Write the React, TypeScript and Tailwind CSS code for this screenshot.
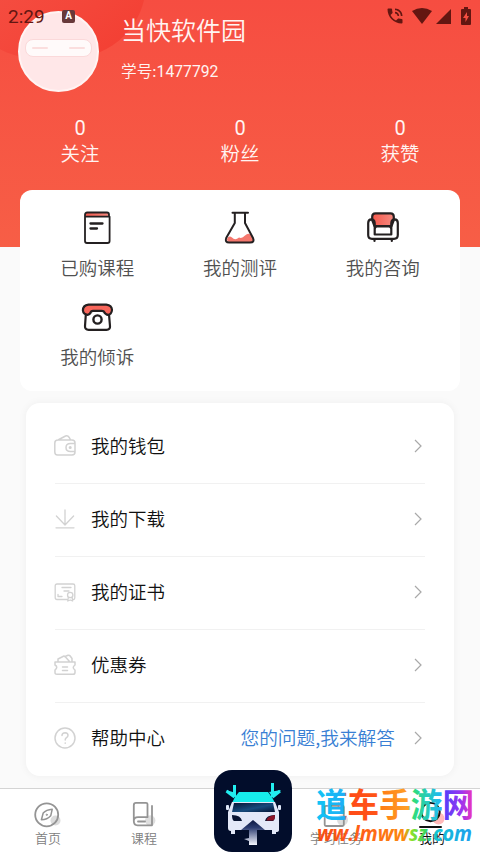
import React from "react";

const ink = { stroke: "#242021", strokeWidth: 2.2, strokeLinecap: "round", strokeLinejoin: "round", fill: "none" } as const;
const soft = { stroke: "#d2d2d2", strokeWidth: 1.5, strokeLinecap: "round", strokeLinejoin: "round", fill: "none" } as const;
const tab = { stroke: "#949494", strokeWidth: 1.8, strokeLinecap: "round", strokeLinejoin: "round", fill: "none" } as const;

function Gradients() {
  return (
    <svg className="absolute h-0 w-0" aria-hidden="true">
      <defs>
        <linearGradient id="coral" x1="0" y1="0" x2="1" y2="0">
          <stop offset="0" stopColor="#f4584c" />
          <stop offset="1" stopColor="#f58a80" />
        </linearGradient>
        <linearGradient id="brand" gradientUnits="userSpaceOnUse" x1="0" y1="0" x2="158" y2="0">
          <stop offset="0" stopColor="#10c4f5" />
          <stop offset="0.18" stopColor="#1eaef5" />
          <stop offset="0.195" stopColor="#ff4a17" />
          <stop offset="0.38" stopColor="#ff5418" />
          <stop offset="0.4" stopColor="#ff7b14" />
          <stop offset="0.585" stopColor="#ffa028" />
          <stop offset="0.6" stopColor="#31e070" />
          <stop offset="0.79" stopColor="#20b8f5" />
          <stop offset="0.8" stopColor="#4a3ffa" />
          <stop offset="0.92" stopColor="#9b35f0" />
          <stop offset="1" stopColor="#f535b4" />
        </linearGradient>
        <linearGradient id="brandUrl" gradientUnits="userSpaceOnUse" x1="0" y1="0" x2="158" y2="0">
          <stop offset="0" stopColor="#f84a14" />
          <stop offset="0.3" stopColor="#ff6018" />
          <stop offset="0.56" stopColor="#fb8a10" />
          <stop offset="0.6" stopColor="#8fe02a" />
          <stop offset="0.69" stopColor="#3fd85a" />
          <stop offset="0.76" stopColor="#11c4d3" />
          <stop offset="1" stopColor="#219bef" />
        </linearGradient>
      </defs>
    </svg>
  );
}

function BookIcon() {
  return (
    <svg className="h-9 w-9" viewBox="0 0 36 36" {...ink}>
      <path d="M6 7V4.7Q6 2.5 8.2 2.5H28.5Q30 2.5 30 4V7Z" fill="url(#coral)" stroke="none" />
      <path d="M6 7V4.8Q6 2.5 8.3 2.5H28Q30 2.5 30 4.5V6.7H7.5M6 7V31Q6 33 8 33H28.5Q30.6 33 30.6 31V6.7" strokeWidth="1.8" />
      <path d="M11.5 13.5H23.5M11.5 18.5H18" strokeWidth="2.3" />
    </svg>
  );
}
function FlaskIcon() {
  return (
    <svg className="h-9 w-9" viewBox="0 0 36 36" {...ink} strokeWidth={2}>
      <path d="M5 29Q7 25 10 27.5Q13 31 17 27.5Q20 29 23 25.5Q27 22 29.5 26L31.5 30Q31 32 29 32H8Q5 32 5 29Z" fill="#f4776d" stroke="none" />
      <path d="M10.5 2.7H26M12.8 2.8V13L4.2 28Q2.6 32.5 7.2 32.5H28Q33 32.5 31 28L23 13V2.8" />
    </svg>
  );
}
function SofaIcon() {
  return (
    <svg className="h-9 w-9" viewBox="0 0 36 36" {...ink}>
      <path d="M7.2 10V6.8Q7.2 3.4 10.5 3.4H25.5Q28.8 3.4 28.8 6.8V10L26.5 16H9.5Z" fill="url(#coral)" />
      <path d="M9.7 24.5V13Q9.4 9.4 6.4 9.4Q3.2 9.4 3.2 13V25Q3.2 28.8 7 28.8H29Q32.8 28.8 32.8 25V13Q32.8 9.4 29.6 9.4Q26.6 9.4 26.3 13V24.5ZM9.7 19Q10 16.4 12 16.4H24Q26 16.4 26.3 19M9.5 29.3V31M26.8 29.3V31" />
    </svg>
  );
}
function PhoneIcon() {
  return (
    <svg className="h-9 w-9" viewBox="0 0 36 36" {...ink}>
      <path d="M7 13L6 27Q5.8 30.8 9.6 30.8H27.5Q31.4 30.8 31 27L29.8 13" fill="white" />
      <path d="M9.5 5.7H27.3Q32.8 6.4 33 11Q32.5 15.6 29 15.8Q26.5 15.6 24.8 12.4Q24 11.8 22.5 11.8H14Q12.8 11.8 12 12.6Q11 15.6 8.5 15.8Q4.4 15.4 3.9 11.4Q4 6.4 9.5 5.7Z" fill="#f8665b" />
      <circle cx="18.5" cy="20.5" r="4.1" strokeWidth="2.4" />
    </svg>
  );
}

function WalletIcon() {
  return (
    <svg className="h-6 w-6" viewBox="0 0 24 24" {...soft}>
      <path d="M5 6H19Q22 6 22 9V18Q22 21 19 21H4.5Q1.8 21 1.8 18V9Q1.8 6 5 6L12.5 2Q15 .5 17.5 5.8M22 9.5H17.5Q13 9.5 13 13.5Q13 17.5 17.5 17.5H22" />
      <circle cx="17.2" cy="13.5" r=".8" />
    </svg>
  );
}
function DownloadIcon() {
  return (
    <svg className="h-6 w-6" viewBox="0 0 24 24" {...soft} strokeWidth={1.3}>
      <path d="M12 3V18M3.4 9L12 18L20.6 9M3 20.8H21" />
    </svg>
  );
}
function CertificateIcon() {
  return (
    <svg className="h-6 w-6" viewBox="0 0 24 24" {...soft} strokeWidth={1.3}>
      <path d="M14 19.5H4Q2.2 19.5 2.2 17.8V5.7Q2.2 4 4 4H20Q21.8 4 21.8 5.7V17.8Q21.8 19.5 20.5 19.5M9 7.5H18M11 11H16M5 16.5V14.5M5 16.5H9M15.3 17.5L14.8 21L17.2 20L19.6 21L19.2 17.5" />
      <circle cx="17.2" cy="15" r="2.7" />
    </svg>
  );
}
function CouponIcon() {
  return (
    <svg className="h-6 w-6" viewBox="0 0 24 24" {...soft}>
      <path d="M2 9H22V12Q18.5 14.5 22 17V19.5Q22 21.3 20 21.3H4Q1.7 21.3 2 19V17Q5.5 14 2 12ZM5 8.5V6L10 3.5Q11 2.5 12.5 4L16.5 8.5M12 3.5L15 2.3Q16.5 2 17.2 3L19 5.5V8.5M9.5 14H14.5M9.5 17.5H14.5" />
    </svg>
  );
}
function HelpIcon() {
  return (
    <svg className="h-6 w-6" viewBox="0 0 24 24" {...soft}>
      <circle cx="12" cy="12" r="10" />
      <path d="M9 9.6Q9 6.8 12.2 6.8Q15 7 15 9.3Q15 10.7 13.5 11.6Q12.2 12.5 12.2 14M12.2 17V17.2" />
    </svg>
  );
}

function HomeIcon() {
  return (
    <svg className="h-7 w-7" viewBox="0 0 28 28" {...tab}>
      <circle cx="21.5" cy="18.5" r="5" fill="#dcdcdc" stroke="none" />
      <circle cx="12.7" cy="12.8" r="11.5" />
      <path d="M7.4 17.8L9.2 11Q12.2 7.8 18.2 7.3L16.7 13.8Q13.2 17.8 7.4 17.8Z" strokeWidth="1.5" />
      <circle cx="12.7" cy="12.8" r=".6" strokeWidth="1" />
    </svg>
  );
}
function CourseIcon() {
  return (
    <svg className="h-7 w-7" viewBox="0 0 28 28" {...tab}>
      <circle cx="20.2" cy="18.5" r="5.2" fill="#dedede" stroke="none" />
      <path d="M17.5 15V2Q17.5 .9 16 .9H6Q3.8 .9 3.8 3.2V19Q3.8 15.2 8 15.2H17.5M3.8 19Q3.8 23.3 7.5 23.3H22V4M8 19.5H15" />
    </svg>
  );
}
function TaskIcon() {
  return (
    <svg className="h-7 w-7" viewBox="0 0 28 28" {...tab}>
      <circle cx="20.5" cy="18" r="5.5" fill="#dedede" stroke="none" />
      <path d="M4 3.8H20.5Q21.8 3.8 21.8 5V22.8Q21.8 24 20.5 24H4Q2.7 24 2.7 22.8V5Q2.7 3.8 4 3.8ZM8 1.5V6M16.5 1.5V6M8 16H16" />
    </svg>
  );
}
function MineIcon() {
  return (
    <svg className="h-7 w-7" viewBox="0 0 28 28" {...tab} stroke="#111" strokeWidth={2}>
      <circle cx="20.5" cy="16.5" r="6" fill="#ffb9b9" stroke="none" />
      <circle cx="12.5" cy="10" r="9.2" />
      <path d="M2 25H23" />
    </svg>
  );
}

function StatusBar() {
  return (
    <div className="absolute inset-x-0 top-0 z-10 flex h-8 items-center pr-[9px] pl-2 text-[#631611]">
      <span className="w-[54px] font-['Roboto',sans-serif] text-[19px] leading-none font-normal">2:29</span>
      <span className="flex h-[13px] w-[13px] items-center justify-center rounded-[2px] bg-[#68393a] font-['Roboto',sans-serif] text-[10px] leading-none font-bold text-white">A</span>
      <div className="ml-auto flex items-center">
        <svg className="h-[20px] w-[20px]" viewBox="0 0 24 24" fill="currentColor">
          <path d="M20 15.5c-1.25 0-2.45-.2-3.57-.57-.35-.11-.74-.03-1.02.24l-2.2 2.2c-2.83-1.44-5.15-3.75-6.59-6.59l2.2-2.2c.28-.28.36-.67.25-1.02C8.7 6.45 8.5 5.25 8.5 4c0-.55-.45-1-1-1H4c-.55 0-1 .45-1 1 0 9.39 7.61 17 17 17 .55 0 1-.45 1-1v-3.5c0-.55-.45-1-1-1zM19 12h2c0-4.97-4.03-9-9-9v2c3.87 0 7 3.13 7 7zm-4 0h2c0-2.76-2.24-5-5-5v2c1.66 0 3 1.34 3 3z" />
        </svg>
        <svg className="ml-[7px] h-4 w-[20px]" viewBox="0 0 20 16" fill="currentColor"><path d="M10 16L0 3Q10-3 20 3Z" /></svg>
        <svg className="ml-1 h-[15px] w-[15px]" viewBox="0 0 15 15" fill="currentColor"><path d="M15 0V15H0Z" /></svg>
        <svg className="ml-2.5 h-[18px] w-[10px]" viewBox="0 0 10 18" fill="currentColor"><path fillRule="evenodd" d="M3 0H7V2H9Q10 2 10 3V17Q10 18 9 18H1Q0 18 0 17V3Q0 2 1 2H3ZM6 5L2 11H4.5V15L8 9H6Z" /></svg>
      </div>
    </div>
  );
}

const stats = ["关注", "粉丝", "获赞"];
const services = [
  { label: "已购课程", icon: <BookIcon /> },
  { label: "我的测评", icon: <FlaskIcon /> },
  { label: "我的咨询", icon: <SofaIcon /> },
  { label: "我的倾诉", icon: <PhoneIcon /> },
];
const menu = [
  { label: "我的钱包", icon: <WalletIcon /> },
  { label: "我的下载", icon: <DownloadIcon /> },
  { label: "我的证书", icon: <CertificateIcon /> },
  { label: "优惠券", icon: <CouponIcon /> },
  { label: "帮助中心", icon: <HelpIcon />, note: "您的问题,我来解答" },
];
const tabs = [
  { label: "首页", icon: <HomeIcon /> },
  { label: "课程", icon: <CourseIcon /> },
  { label: "", icon: null },
  { label: "学习任务", icon: <TaskIcon /> },
  { label: "我的", icon: <MineIcon />, active: true },
];

function CarBadge() {
  return (
    <svg className="absolute top-[770px] left-[214px] h-[82px] w-[78px]" viewBox="0 0 78 82">
      <defs>
        <linearGradient id="roadArrow" x1="0" y1="0" x2="0" y2="1">
          <stop offset="0" stopColor="#0b1640" />
          <stop offset=".3" stopColor="#2c3c70" />
          <stop offset="1" stopColor="#f5f7ff" />
        </linearGradient>
        <linearGradient id="glass" x1="0" y1="0" x2="1" y2="1">
          <stop offset="0" stopColor="#061334" />
          <stop offset=".55" stopColor="#174b7d" />
          <stop offset="1" stopColor="#061334" />
        </linearGradient>
      </defs>
      <rect width="78" height="82" rx="18" fill="#020d2b" />
      <path d="M20.5 15V26M12.5 21L20.5 27M58.5 13V27M66 21L58.5 27" stroke="#22eef0" strokeWidth="3" fill="none" />
      <path d="M12 20L22 23V28ZM55 22L67 20L59 28Z" fill="#22eef0" />
      <path d="M25 22H54Q59 28 61 33H18Q20 27 25 22Z" fill="#16edec" />
      <path d="M18 32H61L65 42V60Q65 62 62 62V64H58V60H21V64H17V61Q14 61 14 58V42Z" fill="#e3e8f8" />
      <path d="M20 33H59L61 42H18Z" fill="url(#glass)" />
      <path d="M18 45Q27 45 28 51H20Q18 50 18 45ZM61 45Q52 45 51 51H59Q61 50 61 45Z" fill="#081331" />
      <path d="M61 45Q53 46 52.5 50.5H59Q61 50 61 45Z" fill="#8d1226" />
      <rect x="12" y="35" width="3" height="5" rx="1" fill="#dfe7f8" />
      <rect x="64" y="35" width="3" height="5" rx="1" fill="#dfe7f8" />
      <path d="M39 50L51 60H43V75H35V71L30 69L35 68V60H27Z" fill="url(#roadArrow)" />
    </svg>
  );
}

function SiteMark() {
  return (
    <svg className="absolute top-[774px] left-[306px] h-[80px] w-[174px] overflow-visible" viewBox="-10 -10 174 80">
      <text x="0" y="33" textLength="158" lengthAdjust="spacingAndGlyphs" fill="url(#brand)" className="font-['Noto_Sans_CJK_SC',sans-serif] text-[33px] font-bold">道车手游网</text>
      <text x="1" y="57" textLength="155" lengthAdjust="spacingAndGlyphs" fill="url(#brandUrl)" className="font-['Open_Sans',sans-serif] text-[22px] font-bold italic">ww.lmwwsz.com</text>
    </svg>
  );
}

export default function App() {
  return (
    <div className="relative flex h-[854px] w-[480px] flex-col overflow-hidden bg-[#fafafa] font-['Noto_Sans_CJK_SC',sans-serif] font-[350]">
      <Gradients />
      <StatusBar />
      <header className="relative h-[247px] shrink-0 overflow-hidden bg-linear-to-b from-[#f64d41] to-[#f75e46]">
        <div className="absolute -top-[92px] -left-[40px] h-[150px] w-[186px] rounded-full bg-linear-to-br from-[#f65549] to-[#f33d31]" />
        <div className="relative flex items-start pt-[11px] pl-[18px]">
          <div className="flex h-[81px] w-[81px] items-start justify-center rounded-full border-2 border-[#fff4f3] bg-[#ffe7e8] pt-[26px]">
            <div className="flex h-[18px] w-[67px] items-center justify-between rounded-[8px] border border-[#fbd9da] bg-[#fffafa] px-1.5">
              <span className="h-[2px] w-4 rounded-full bg-[#fbdede]" />
              <span className="h-[2px] w-4 rounded-full bg-[#fbdede]" />
            </div>
          </div>
          <div className="pl-[22px] text-[#fff4f2]">
            <h1 className="text-[25px] leading-[36px] font-[350]">当快软件园</h1>
            <p className="mt-[13px] text-[15.7px] leading-[22px]">学号:<span className="font-['Roboto',sans-serif] font-normal">1477792</span></p>
          </div>
        </div>
        <div className="relative mt-[25px] grid grid-cols-3 text-center text-[#fff4f2]">
          {stats.map((s) => (
            <div key={s}>
              <div className="font-['Roboto',sans-serif] text-[20px] leading-[22px] font-normal">0</div>
              <div className="text-[19.5px] leading-[28px]">{s}</div>
            </div>
          ))}
        </div>
      </header>
      <section className="relative z-1 mx-5 -mt-[57px] grid h-[201px] shrink-0 grid-cols-3 content-start rounded-[12px] bg-white px-1.5 pt-[20px]">
        {services.map((s) => (
          <div key={s.label} className="flex h-[89px] flex-col items-center">
            {s.icon}
            <span className="mt-[7px] text-[18.5px] leading-[28px] text-[#505050]">{s.label}</span>
          </div>
        ))}
      </section>
      <section className="mx-[26px] mt-3 h-[373px] shrink-0 rounded-[14px] bg-white px-[27px] pt-2 shadow-[0_0_9px_rgba(0,0,0,0.05)]">
        {menu.map((m) => (
          <div key={m.label} className="flex h-[73px] items-center bg-[linear-gradient(#f1f1f1,#f1f1f1)] bg-[length:370px_1px] bg-bottom bg-no-repeat pb-1 last:bg-none">
            {m.icon}
            <span className="ml-3.5 text-[18.5px] text-[#111]">{m.label}</span>
            {m.note && <span className="mr-[17px] ml-auto text-[18.7px] text-[#397fd4]">{m.note}</span>}
            <svg className={m.note ? "mr-[3px] h-4 w-3" : "mr-[3px] ml-auto h-4 w-3"} viewBox="0 0 12 16" fill="none" stroke="#a9a9a9" strokeWidth="1.2">
              <path d="M3 2L9 8L3 14" />
            </svg>
          </div>
        ))}
      </section>
      <nav className="mt-3 grid h-[66px] shrink-0 grid-cols-5 border-t border-[#d4d4d4] bg-white pt-[13px]">
        {tabs.map((t) => (
          <div key={t.label} className="flex flex-col items-center">
            <span className="flex h-[27px]">{t.icon}</span>
            <span className={t.active ? "text-[13px] leading-[18px] font-normal text-[#111]" : "text-[13px] leading-[18px] text-[#808080]"}>{t.label}</span>
          </div>
        ))}
      </nav>
      <CarBadge />
      <SiteMark />
    </div>
  );
}
